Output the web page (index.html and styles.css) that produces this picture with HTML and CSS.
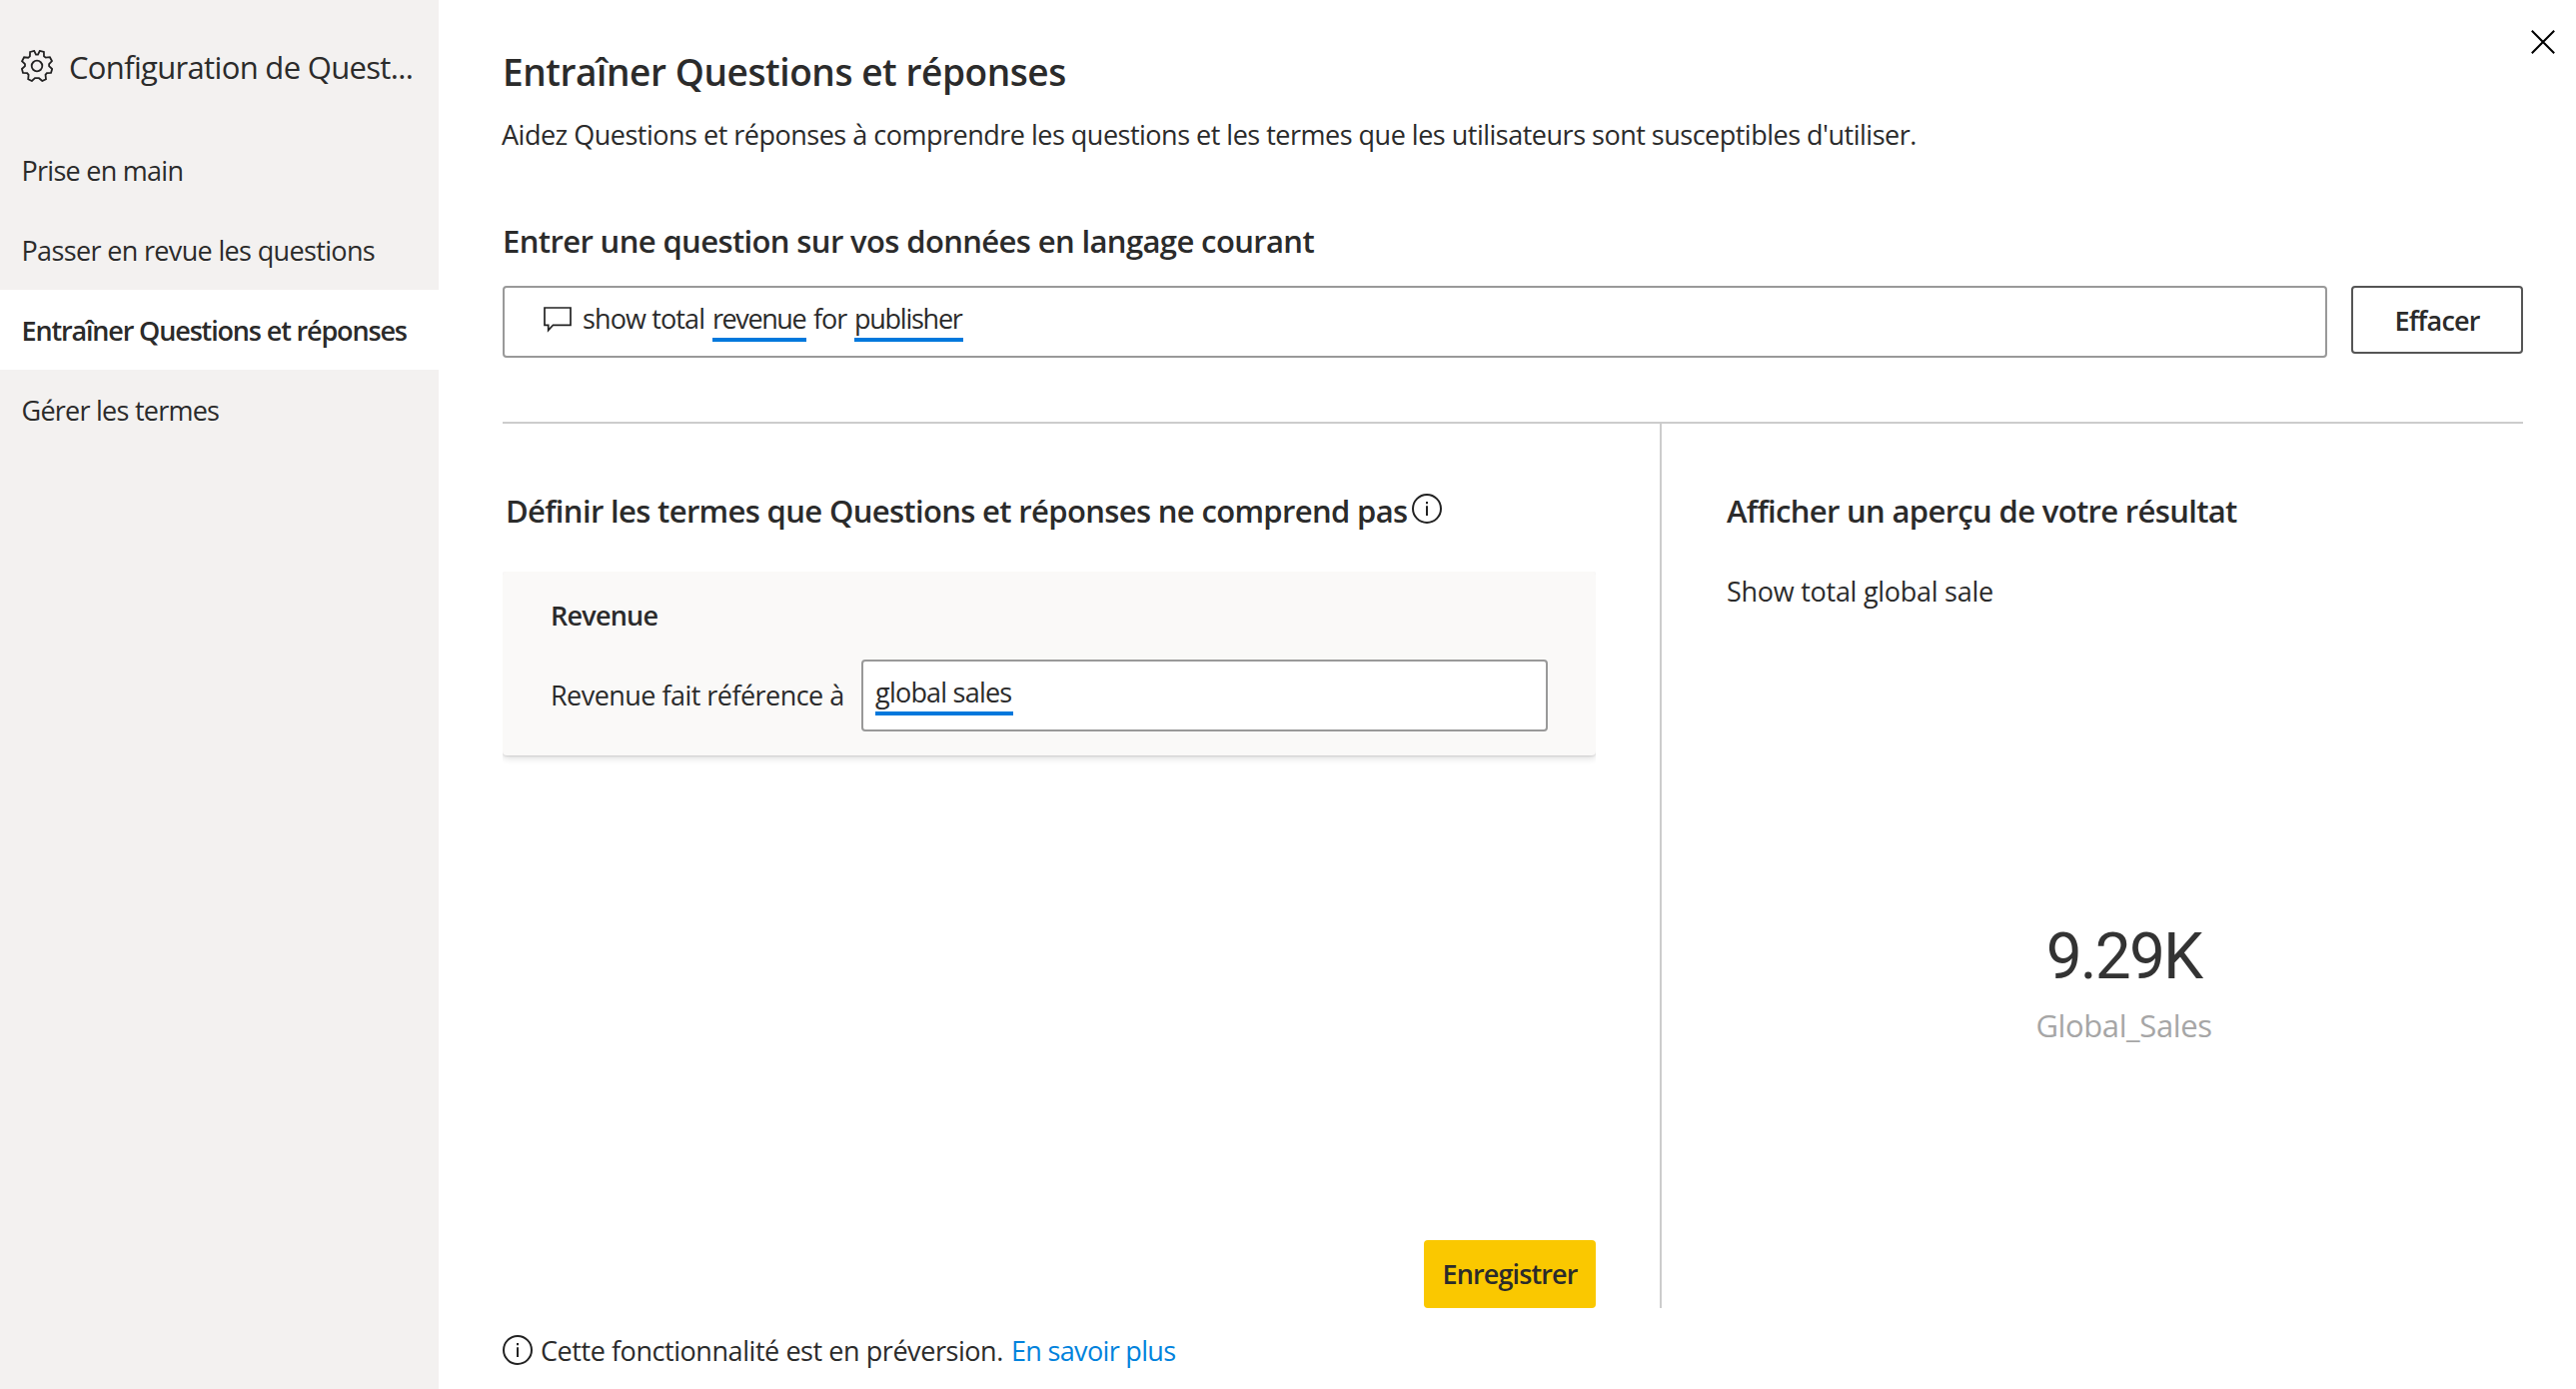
FILE: index.html
```html
<!DOCTYPE html>
<html lang="fr">
<head>
<meta charset="utf-8">
<title>Configuration de Questions et réponses</title>
<link rel="stylesheet" href="styles.css">
</head>
<body>
<div class="dialog">
  <aside class="sidebar">
    <header class="sidebar-head">
      <svg class="gear" viewBox="0 0 32 32" aria-hidden="true"><path d="M9.1 2 L13.2 .9 L15 4.7 H17 L18.8 .9 L22.9 2 L23 6.3 L24.7 7.6 L28.9 7.2 L31 11 L28.1 14.2 L28.1 16.1 L31.2 19.1 L30 22.9 L25.9 23.2 L24.5 24.8 L25 29.2 L21.3 31 L18 28.2 L14 28.2 L10.9 31 L7.2 29.2 L7.6 24.9 L6.2 23.2 L2 22.9 L.9 19 L4 16.2 L4 14.1 L1 11.2 L3.1 7.3 L7.2 7.7 L8.9 6.4 Z"/><circle cx="16" cy="16" r="5.3"/></svg>
      <span class="sidebar-title">Configuration de Quest...</span>
    </header>
    <nav class="nav">
      <a class="nav-item nav-start">Prise en main</a>
      <a class="nav-item nav-review">Passer en revue les questions</a>
      <a class="nav-item nav-teach active">Entraîner Questions et réponses</a>
      <a class="nav-item nav-terms">Gérer les termes</a>
    </nav>
  </aside>

  <main class="main">
    <svg class="close" viewBox="0 0 24 24" aria-label="Fermer"><path d="M.8 .8 L23.2 23.2 M23.2 .8 L.8 23.2"/></svg>
    <h1 class="title">Entraîner Questions et réponses</h1>
    <p class="intro">Aidez Questions et réponses à comprendre les questions et les termes que les utilisateurs sont susceptibles d'utiliser.</p>
    <h2 class="heading ask-heading">Entrer une question sur vos données en langage courant</h2>
    <div class="ask-row">
      <div class="ask-box">
        <svg class="bubble" viewBox="0 0 28 26" aria-hidden="true"><path d="M1 1 H27 V18.3 H9.5 L4.7 23.6 V18.3 H1 Z"/></svg>
        <span class="word-show">show total</span>
        <span class="term word-revenue">revenue</span>
        <span class="word-for">for</span>
        <span class="term word-publisher">publisher</span>
      </div>
      <button class="btn btn-clear">Effacer</button>
    </div>

    <div class="panels">
      <section class="define">
        <div class="define-head">
          <h2 class="heading define-heading">Définir les termes que Questions et réponses ne comprend pas</h2>
          <svg class="info" viewBox="0 0 30 30" aria-hidden="true"><circle cx="15" cy="15" r="14"/><path d="M15 12.2 V22 M15 8 V10.2"/></svg>
        </div>
        <div class="card">
          <h3 class="card-title">Revenue</h3>
          <div class="card-row">
            <span class="card-label">Revenue fait référence à</span>
            <div class="card-input"><span class="term word-sales">global sales</span></div>
          </div>
        </div>
        <button class="btn btn-save">Enregistrer</button>
      </section>
      <section class="preview">
        <h2 class="heading preview-heading">Afficher un aperçu de votre résultat</h2>
        <p class="preview-text">Show total global sale</p>
        <div class="kpi">
          <div class="kpi-value">9.29K</div>
          <div class="kpi-label">Global_Sales</div>
        </div>
      </section>
    </div>

    <footer class="note">
      <svg class="info" viewBox="0 0 30 30" aria-hidden="true"><circle cx="15" cy="15" r="14"/><path d="M15 12.2 V22 M15 8 V10.2"/></svg>
      <span class="note-text">Cette fonctionnalité est en préversion.</span>
      <a class="note-link">En savoir plus</a>
    </footer>
  </main>
</div>
</body>
</html>
```
FILE: styles.css
```css
* { box-sizing: border-box; }
body {
  margin: 0;
  font-family: "Open Sans", "Noto Sans", sans-serif;
  font-size: 27px;
  line-height: 40px;
  color: #2b2b2b;
  background: #fff;
}
h1, h2, h3, p { margin: 0; font-weight: 600; }
svg { display: block; flex: none; fill: none; stroke: #222; stroke-width: 2; }
span, a, h1, h2, h3, p { white-space: nowrap; }

.dialog { display: flex; width: 2578px; height: 1390px; overflow: hidden; }

/* Sidebar */
.sidebar { flex: none; width: 439px; background: #f3f1f0; }
.sidebar-head { display: flex; align-items: flex-start; height: 130px; padding: 45px 0 0 21px; }
.gear { width: 32px; height: 32px; margin-top: 5px; stroke-width: 1.8; }
.sidebar-title { margin-left: 16px; font-size: 31px; line-height: 44px; letter-spacing: -0.673px; }
.nav-item { display: block; height: 80px; padding-left: 21.5px; line-height: 82px; }
.nav-start { letter-spacing: -0.727px; }
.nav-review { letter-spacing: -0.65px; }
.nav-teach { letter-spacing: -1.15px; }
.nav-terms { letter-spacing: -0.75px; }
.active { background: #fff; font-weight: 600; }

/* Main column */
.main { position: relative; display: flex; flex-direction: column; flex: 1; padding: 47px 53px 0 64px; }
.close { position: absolute; top: 30px; right: 21px; width: 24px; height: 24px; stroke: #000; }
.title { font-size: 37px; line-height: 50px; letter-spacing: -0.42px; }
.intro { margin: 18px 0 0 -1px; font-weight: 400; letter-spacing: -0.498px; }
.heading { font-size: 31px; line-height: 44px; }
.ask-heading { margin-top: 64px; letter-spacing: -0.62px; }

.ask-row { display: flex; align-items: flex-start; margin-top: 23px; gap: 24px; }
.ask-box { display: flex; flex: 1; height: 72px; padding: 12px 39px; border: 2px solid #999; border-radius: 4px; }
.bubble { width: 28px; height: 26px; margin: 7px 11px 0 0; stroke-width: 1.7; }
.term { border-bottom: 4px solid #0078dc; height: 42px; line-height: 37px; }
.word-show { width: 130px; line-height: 37px; letter-spacing: -0.883px; }
.word-revenue { width: 94px; letter-spacing: -1.42px; }
.word-for { width: 48px; padding-left: 7px; line-height: 37px; letter-spacing: -1px; }
.word-publisher { width: 109px; letter-spacing: -1.25px; }

.btn { border-radius: 4px; height: 68px; width: 172px; padding: 0; font: 600 27px/64px "Open Sans", "Noto Sans", sans-serif; color: #2b2b2b; text-align: center; }
.btn-clear { border: 2px solid #555; padding-top: 1px; background: #fff; letter-spacing: -0.81px; }
.btn-save { align-self: flex-end; margin-top: auto; border: 0; background: #fac800; line-height: 68px; letter-spacing: -0.86px; }

/* Two panels under the rule */
.panels { display: flex; height: 887px; margin-top: 64px; border-top: 2px solid #ccc; }
.define { display: flex; flex-direction: column; width: 1160px; padding: 65px 64px 0 0; border-right: 2px solid #ccc; }
.define-head { display: flex; padding-left: 3px; }
.define-heading { width: 907px; letter-spacing: -0.65px; }
.info { width: 30px; height: 30px; }
.define-head .info { margin-top: 5px; }
.card { height: 184px; margin-top: 39px; padding: 24px 48px 0 48px; border-radius: 4px; background: #faf9f8; box-shadow: 0 3px 7px rgba(0, 0, 0, .13), 0 1px 2px rgba(0, 0, 0, .11); clip-path: inset(0 0 -14px 0); }
.card-title { font-size: 27px; letter-spacing: -0.77px; }
.card-row { display: flex; align-items: center; margin-top: 24px; }
.card-label { width: 311px; letter-spacing: -0.54px; }
.card-input { display: flex; flex: 1; height: 72px; padding: 12px; border: 2px solid #999; border-radius: 4px; background: #fff; }
.word-sales { width: 138px; letter-spacing: -0.78px; }

.preview { flex: 1; padding: 65px 0 0 65px; }
.preview-heading { letter-spacing: -0.66px; }
.preview-text { margin-top: 39px; font-weight: 400; letter-spacing: -0.268px; }
.kpi { margin-top: 308px; padding-right: 2px; text-align: center; }
.kpi-value { font: 400 64px/76px Roboto, sans-serif; letter-spacing: -1.9px; color: #333; }
.kpi-label { margin-top: 8px; font-size: 31px; line-height: 44px; letter-spacing: -0.4px; color: #a6a6a6; }

/* Footer note */
.note { display: flex; margin-top: 23px; }
.note .info { margin-top: 4px; }
.note-text { width: 471px; margin-left: 8px; letter-spacing: -0.44px; }
.note-link { letter-spacing: -0.67px; color: #0082dc; }
```
